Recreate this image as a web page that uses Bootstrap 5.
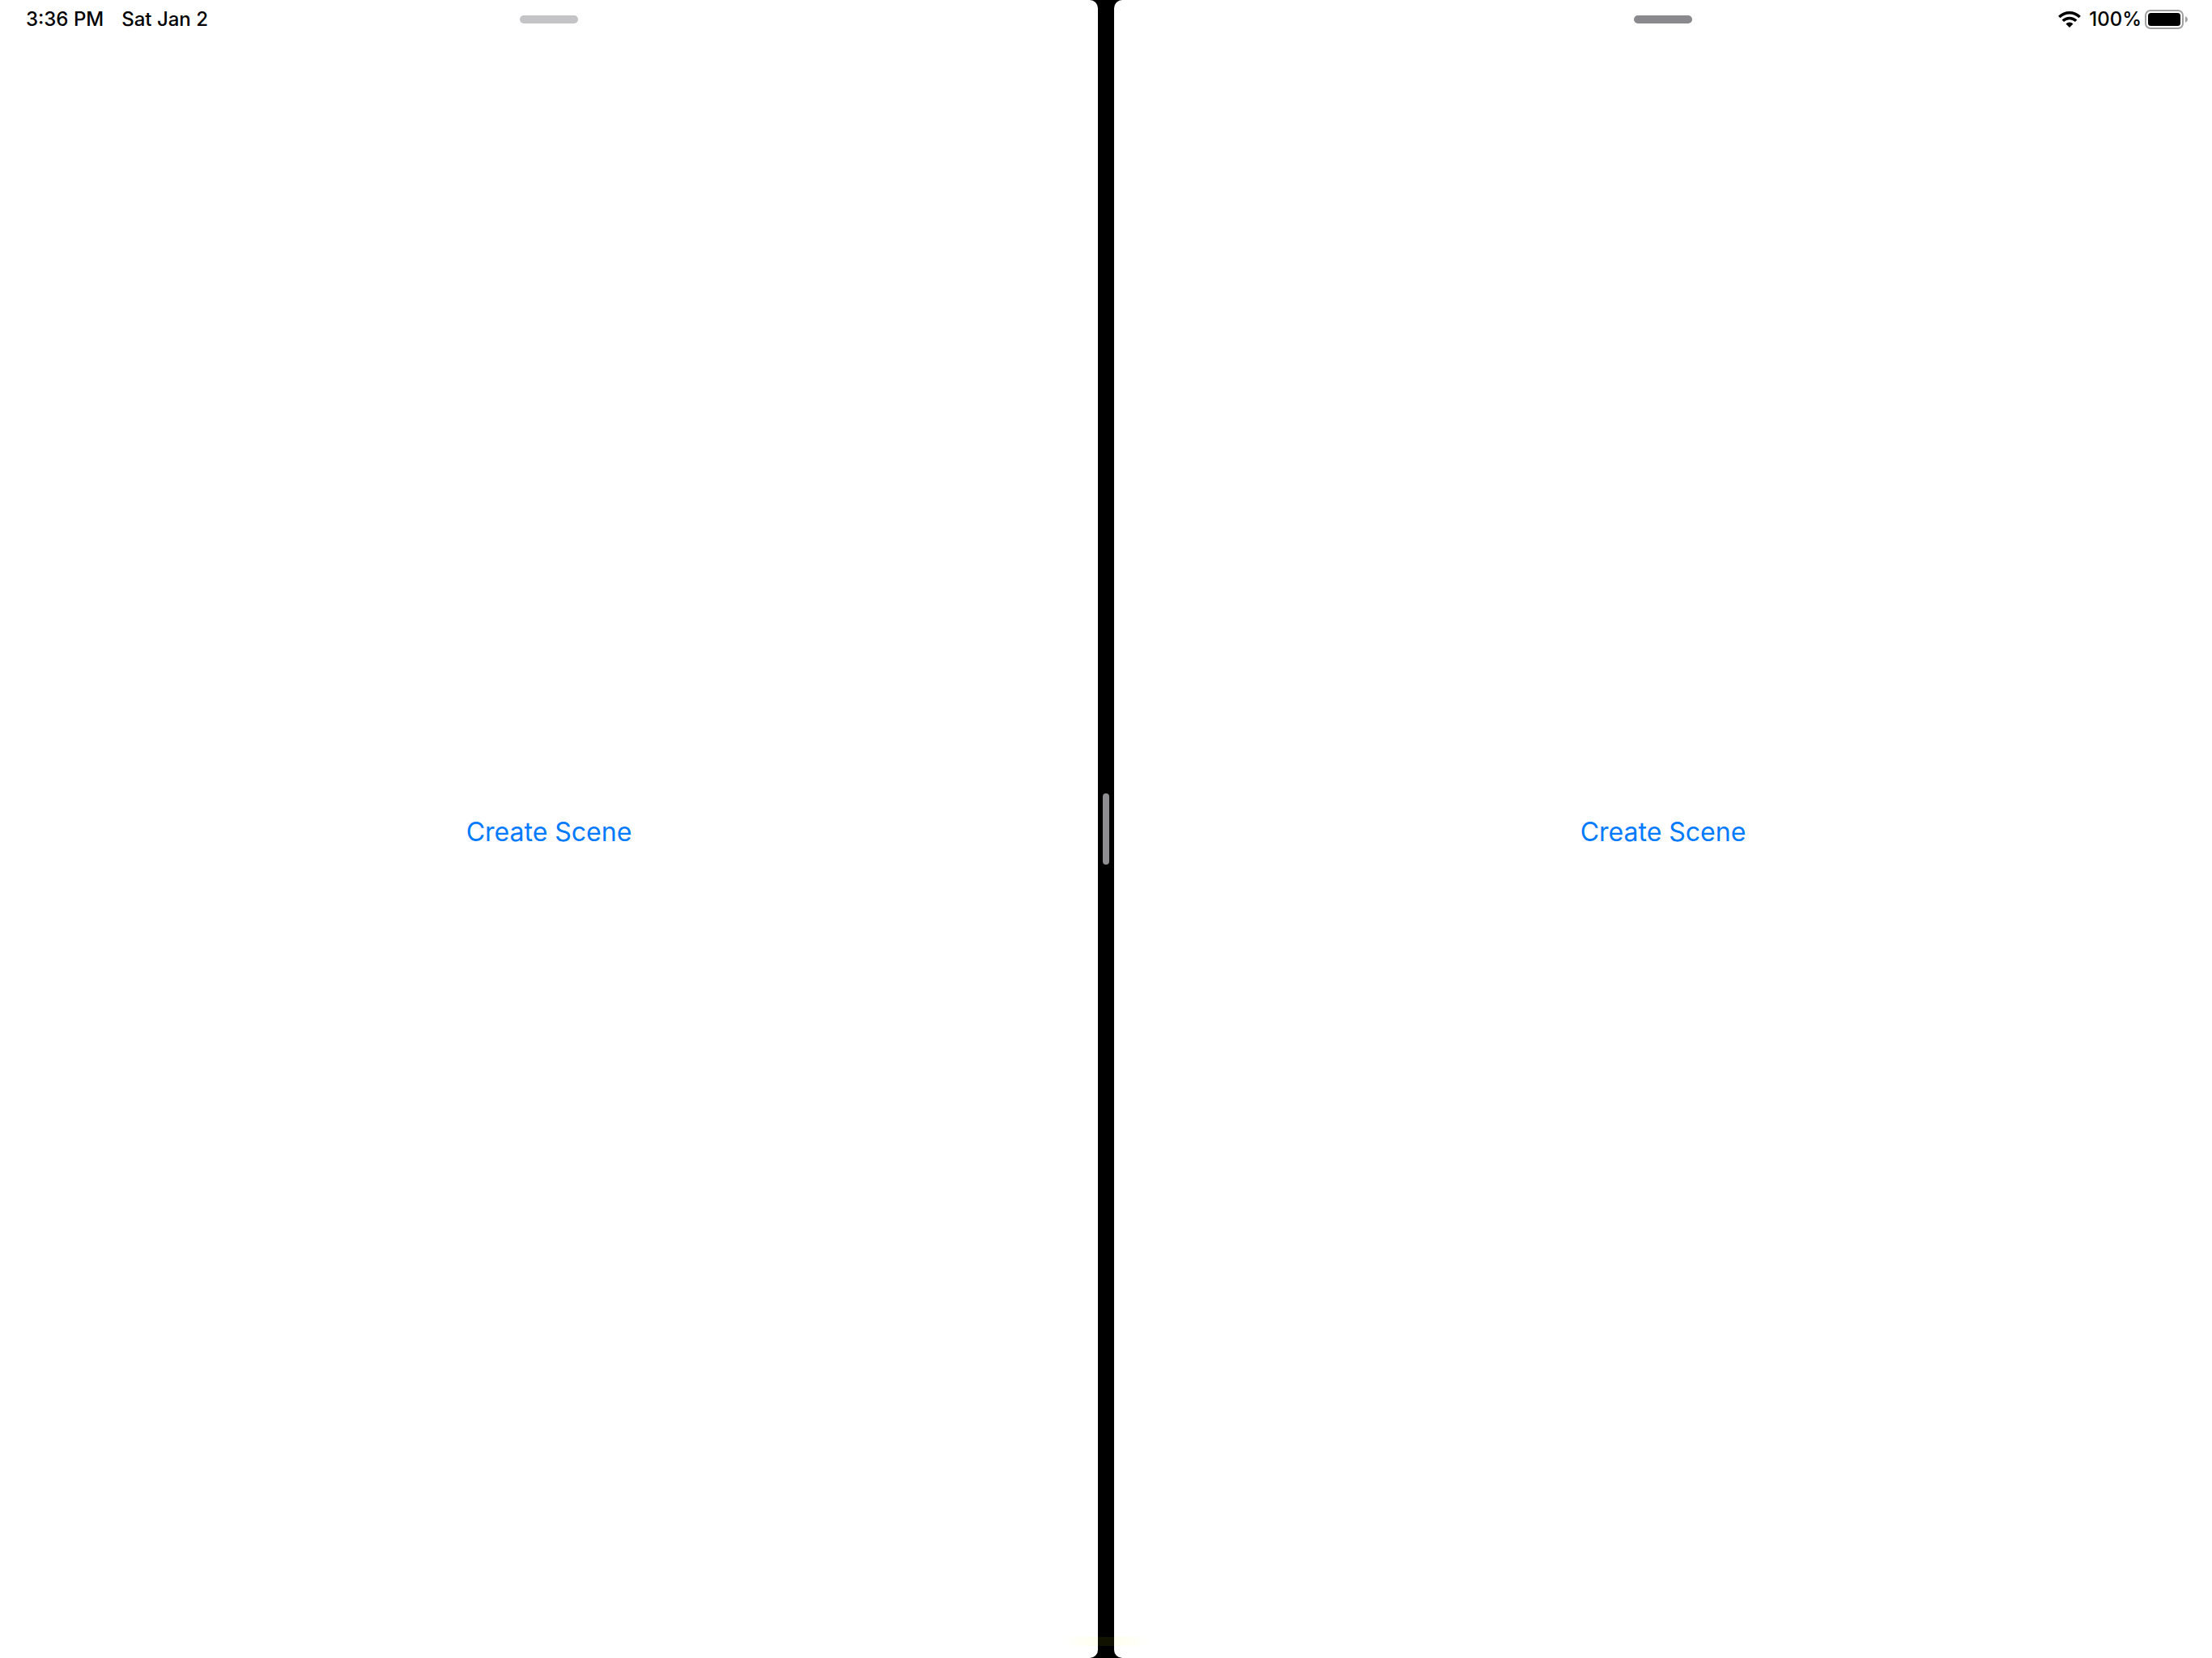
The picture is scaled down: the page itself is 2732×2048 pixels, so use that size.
<!DOCTYPE html>
<html lang="en">
<head>
<meta charset="utf-8">
<meta name="viewport" content="width=device-width, initial-scale=1">
<title>Split View</title>
<link href="https://cdn.jsdelivr.net/npm/bootstrap@5.3.0/dist/css/bootstrap.min.css" rel="stylesheet">
<style>
  body { font-family: Inter, "Liberation Sans", sans-serif; background: #000; color: #000; }
  .split { gap: 20px; }
  .pane { flex: 1 1 0; background: #fff; }
  .pane-left { border-radius: 0 10px 10px 0; }
  .pane-right { border-radius: 10px 0 0 10px; }
  .status { grid-template-columns: 1fr auto 1fr; height: 48px; font-size: 24px; line-height: 48px; font-weight: 500; }
  .status-left { padding-left: 32px; gap: 22px; }
  .status-right { padding-right: 30px; gap: 4px; }
  .wifi { margin-right: 6px; }
  .grabber { width: 72px; height: 10px; background: #c4c4c6; }
  .grabber-active { background: #8a8a8e; }
  .content-area { padding-bottom: 40px; }
  .scene-btn { font-size: 32px; line-height: 44px; color: #007aff; }
  .scene-btn:hover { color: #0062cc; }
  .divider-handle { width: 8px; height: 88px; background: #8e8e93; }
  .edge-glow { bottom: 15px; width: 112px; height: 11px; pointer-events: none;
    background: linear-gradient(90deg, transparent, rgba(255, 255, 0, .07) 45%, rgba(255, 255, 0, .07) 55%, transparent); }
</style>
</head>
<body>
<div class="split d-flex vh-100 position-relative">
  <main class="pane pane-left d-flex flex-column">
    <header class="status d-grid align-items-center">
      <div class="status-left d-flex"><span>3:36 PM</span><span>Sat Jan 2</span></div>
      <div class="grabber rounded-pill"></div>
      <div></div>
    </header>
    <div class="content-area flex-grow-1 d-flex align-items-center justify-content-center">
      <button type="button" class="scene-btn btn p-0 border-0">Create Scene</button>
    </div>
  </main>
  <section class="pane pane-right d-flex flex-column">
    <header class="status d-grid align-items-center">
      <div></div>
      <div class="grabber grabber-active rounded-pill"></div>
      <div class="status-right d-flex align-items-center justify-content-end">
        <svg class="wifi" width="28" height="20" viewBox="0 0 28 20" aria-label="Wi-Fi" role="img">
          <g fill="none" stroke="#000" stroke-width="3.6">
            <path d="M1.300 7Q6.800 1.800 14 1.800T26.700 7"/>
            <path d="M5.800 11.800Q9.300 8.500 14 8.500T22.200 11.800"/>
          </g>
          <path d="M14 13.400Q16.600 13.400 18.500 15.400L14 20L9.500 15.400Q11.400 13.400 14 13.400Z"/>
        </svg>
        <span>100%</span>
        <svg width="53" height="24" viewBox="0 0 53 24" aria-label="Battery full" role="img">
          <rect x="1" y="1" width="46" height="22" rx="6" fill="none" stroke="#a0a0a0" stroke-width="2"/>
          <rect x="4" y="4" width="40" height="16" rx="3.500"/>
          <path d="M50 8Q53 9.500 53 12T50 16Z" fill="#a0a0a0"/>
        </svg>
      </div>
    </header>
    <div class="content-area flex-grow-1 d-flex align-items-center justify-content-center">
      <button type="button" class="scene-btn btn p-0 border-0">Create Scene</button>
    </div>
  </section>
  <div class="divider-handle rounded-pill position-absolute top-50 start-50 translate-middle"></div>
  <div class="edge-glow position-absolute start-50 translate-middle-x"></div>
</div>
<script src="https://cdn.jsdelivr.net/npm/bootstrap@5.3.0/dist/js/bootstrap.bundle.min.js"></script>
</body>
</html>
